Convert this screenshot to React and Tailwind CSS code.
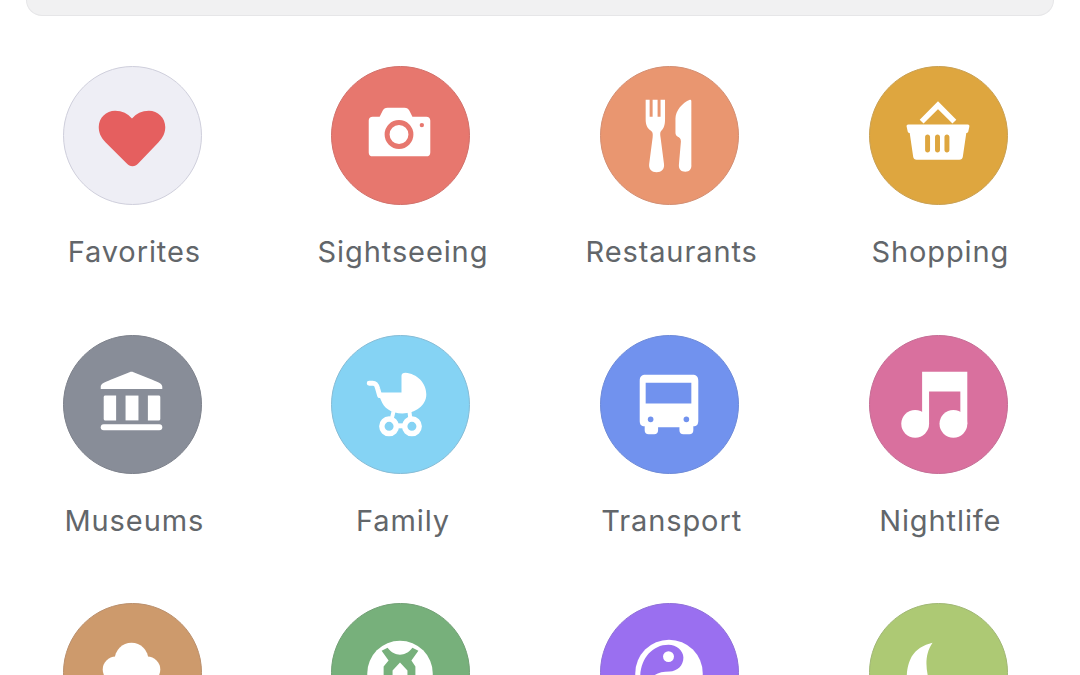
const W = "#ffffff";

const icons = {
  heart: (
    <path fill="#e55f5f" d="M70 101 C67.500 101 66 100 64.500 98.500 L43 77 C38 72 36 67 36 61.500 C36 52 43.500 45 52.500 45 C59.500 45 65.500 48 69.500 53 C73.500 48 79.500 45 86.500 45 C95.500 45 103 52 103 61.500 C103 67 101 72 96 77 L75.500 98.500 C74 100 72.500 101 70 101 Z" />
  ),
  camera: (
    <>
      <path fill={W} d="M42 51 H49 L52 45 C53 43 54.500 42 57 42 H74 C76.500 42 78 43 79 45 L82 51 H96 C98.500 51 100 52.500 100 55 V87 C100 89.500 98.500 91 96 91 H42 C39.500 91 38 89.500 38 87 V55 C38 52.500 39.500 51 42 51 Z" />
      <circle cx="68.500" cy="69" r="12" fill="none" stroke="#e7776e" strokeWidth="5" />
      <circle cx="91.500" cy="59.500" r="2.200" fill="#e7776e" />
    </>
  ),
  cutlery: (
    <>
      <path fill={W} d="M46 34 H50 V51 H53 V34 H58 V51 H61 V34 H65.500 V54 C65.500 60 64 63 62 65 C60.500 66.500 60.500 68 61 72 L64.500 99 C65 104 62 107 57 107 C52 107 49 104 49.500 99 L53 72 C53.500 68 53 66.500 51 65 C48 63 46 60 46 54 Z" />
      <path fill={W} d="M90.500 34 C91.500 34 92 34.500 92 35.500 V99 C92.500 104 90 106.500 86 106.500 C81.500 106.500 79 104 79.500 99 L81.500 76 C81.500 73 80 72 78 71 C76.500 70 76 69 76 67 V53 C76 45 83 37 90.500 34 Z" />
    </>
  ),
  basket: (
    <>
      <path fill="none" stroke={W} strokeWidth="5.500" d="M53 56 L69.500 39.500 L86 56" />
      <path fill={W} fillRule="evenodd" d="M39.500 59 H99.500 C100.800 59 101.500 60 101 61.500 L100 66 C99.800 67 99 67.500 98 67.500 L94.500 91.500 C94.200 93.500 93 94.500 91 94.500 H48 C46 94.500 44.800 93.500 44.500 91.500 L41 67.500 C40 67.500 39.200 67 39 66 L38 61.500 C37.500 60 38.200 59 39.500 59 Z M59 69 C57.500 69 56.500 70 56.500 71.500 V84.500 C56.500 86 57.500 87 59 87 C60.500 87 61.500 86 61.500 84.500 V71.500 C61.500 70 60.500 69 59 69 Z M69 69 C67.500 69 66.500 70 66.500 71.500 V84.500 C66.500 86 67.500 87 69 87 C70.500 87 71.500 86 71.500 84.500 V71.500 C71.500 70 70.500 69 69 69 Z M78.500 69 C77 69 76 70 76 71.500 V84.500 C76 86 77 87 78.500 87 C80 87 81 86 81 84.500 V71.500 C81 70 80 69 78.500 69 Z" />
    </>
  ),
  museum: (
    <>
      <path fill={W} d="M67 37.500 C68.500 37 69.500 37 71 37.500 L90 45 C96 47.500 100 49 100 52 V54.500 H38 V52 C38 49 42 47.500 48 45 Z" />
      <path fill={W} d="M43 61 H53.500 V86 H43 C41.500 86 41 85.500 41 84 V63 C41 61.500 41.500 61 43 61 Z" />
      <rect x="63" y="61" width="13" height="25" fill={W} />
      <path fill={W} d="M85.500 61 H96 C97.500 61 98 61.500 98 63 V84 C98 85.500 97.500 86 96 86 H85.500 Z" />
      <rect x="38" y="90" width="62" height="6" rx="3" fill={W} />
    </>
  ),
  pram: (
    <>
      <path fill={W} d="M71 58 V41 C71 39 72.500 38 75 38 C86.500 39 96 48 96 60 C96 71 85 79 72 79 C60 79 53 73 50.500 66 L47 58 Z" />
      <path fill="none" stroke={W} strokeWidth="5" strokeLinecap="round" d="M38.500 48.500 H42 C45 48.500 46 50 47 54 L49 61" />
      <path fill="none" stroke={W} strokeWidth="4" d="M63 77 L61 85 M79 77 L80 85" />
      <circle cx="58.500" cy="92" r="7.300" fill="none" stroke={W} strokeWidth="5.500" />
      <circle cx="81.500" cy="92" r="7.300" fill="none" stroke={W} strokeWidth="5.500" />
      <rect x="64" y="89" width="12" height="5" fill={W} />
    </>
  ),
  bus: (
    <>
      <path fill={W} fillRule="evenodd" d="M46 40 H93 C97 40 99 42 99 46 V86 C99 90 97.500 92 94 92 V96 C94 98.500 92.500 100 90 100 H84 C81.500 100 80 98.500 80 96 V93 H58.500 V96 C58.500 98.500 57 100 54.500 100 H49 C46.500 100 45 98.500 45 96 V92 C41.500 92 40 90 40 86 V46 C40 42 42 40 46 40 Z M46 48 V69 H92 V48 Z" />
      <circle cx="51" cy="85" r="2.800" fill="#7192ee" />
      <circle cx="87" cy="85" r="2.800" fill="#7192ee" />
    </>
  ),
  music: (
    <>
      <path fill={W} fillRule="evenodd" d="M53.500 37 H99 V90 H92 V57 H60.500 V90 H53.500 Z" />
      <circle cx="46.500" cy="89.500" r="14" fill={W} />
      <circle cx="85" cy="89.500" r="14" fill={W} />
    </>
  ),
  cloud: (
    <>
      <circle cx="69" cy="57" r="17" fill={W} />
      <circle cx="53" cy="67" r="13" fill={W} />
      <circle cx="85" cy="67" r="13" fill={W} />
      <rect x="50" y="62" width="38" height="20" fill={W} />
    </>
  ),
  ball: (
    <>
      <circle cx="69.500" cy="71" r="33" fill={W} />
      <path fill="#77b07b" d="M51 48 L57 45 C61 50 65 52 69.500 52 C74 52 78 50 82 45 L88 48 L81 58 L85 64 V80 H77 V68 L69.500 60 L62 68 V80 H53 V64 L58 58 Z" />
    </>
  ),
  yinyang: (
    <>
      <circle cx="69.500" cy="71" r="34" fill={W} />
      <path fill="#9a6ff0" d="M69 42 C77 42 84 48 84 55 C84 63 78 69 70 69 C62 69 56 71 52 75 H40.500 C40.500 57 52 42 69 42 Z" />
      <circle cx="69" cy="54" r="5.500" fill={W} />
    </>
  ),
  moon: (
    <path fill={W} d="M64 40 C55 42 47 47 43 54 C40 60 38 66 38 76 C38 85 45 90 55 90 H72 C65 86 60 80 59 72 C57 62 57 50 64 40 Z" />
  ),
};

const items = [
  { icon: "heart", label: "Favorites", cls: "bg-[#eeeef5] border-[#cfcfdc]" },
  { icon: "camera", label: "Sightseeing", cls: "bg-[#e7776e] border-[#d2706a]" },
  { icon: "cutlery", label: "Restaurants", cls: "bg-[#e99670] border-[#d38e72]" },
  { icon: "basket", label: "Shopping", cls: "bg-[#dea63f] border-[#c9a052]" },
  { icon: "museum", label: "Museums", cls: "bg-[#888d98] border-[#7d818b]" },
  { icon: "pram", label: "Family", cls: "bg-[#85d3f4] border-[#85bcd6]" },
  { icon: "bus", label: "Transport", cls: "bg-[#7192ee] border-[#6d8ad8]" },
  { icon: "music", label: "Nightlife", cls: "bg-[#d9709e] border-[#c56d95]" },
  { icon: "cloud", cls: "bg-[#cd9a6c] border-[#ba8f6c]" },
  { icon: "ball", cls: "bg-[#77b07b] border-[#72a075]" },
  { icon: "yinyang", cls: "bg-[#9a6ff0] border-[#8f6fd8]" },
  { icon: "moon", cls: "bg-[#adc974] border-[#a0b774]" },
];

export default function App() {
  return (
    <div className="h-[675px] w-[1080px] overflow-hidden bg-white font-['Inter','Liberation_Sans',sans-serif]">
      <div className="ml-[26px] h-[16px] w-[1028px] rounded-b-[16px] border border-t-0 border-[#e6e6e8] bg-[#f1f1f2]" />
      <div className="-ml-[2px] mt-[50px] grid grid-cols-[repeat(4,268.67px)] auto-rows-[268.5px]">
        {items.map((it) => (
          <div key={it.icon} className="flex flex-col items-center">
            <div className={`h-[139px] w-[139px] shrink-0 rounded-full border ${it.cls}`}>
              <svg viewBox="0 0 140 140" className="-m-px block h-[139px] w-[139px]">
                {icons[it.icon]}
              </svg>
            </div>
            {it.label && (
              <div className="mt-[29px] whitespace-nowrap pl-[4px] text-[29px] leading-[36px] tracking-[0.9px] text-[#62666a]">
                {it.label}
              </div>
            )}
          </div>
        ))}
      </div>
    </div>
  );
}
